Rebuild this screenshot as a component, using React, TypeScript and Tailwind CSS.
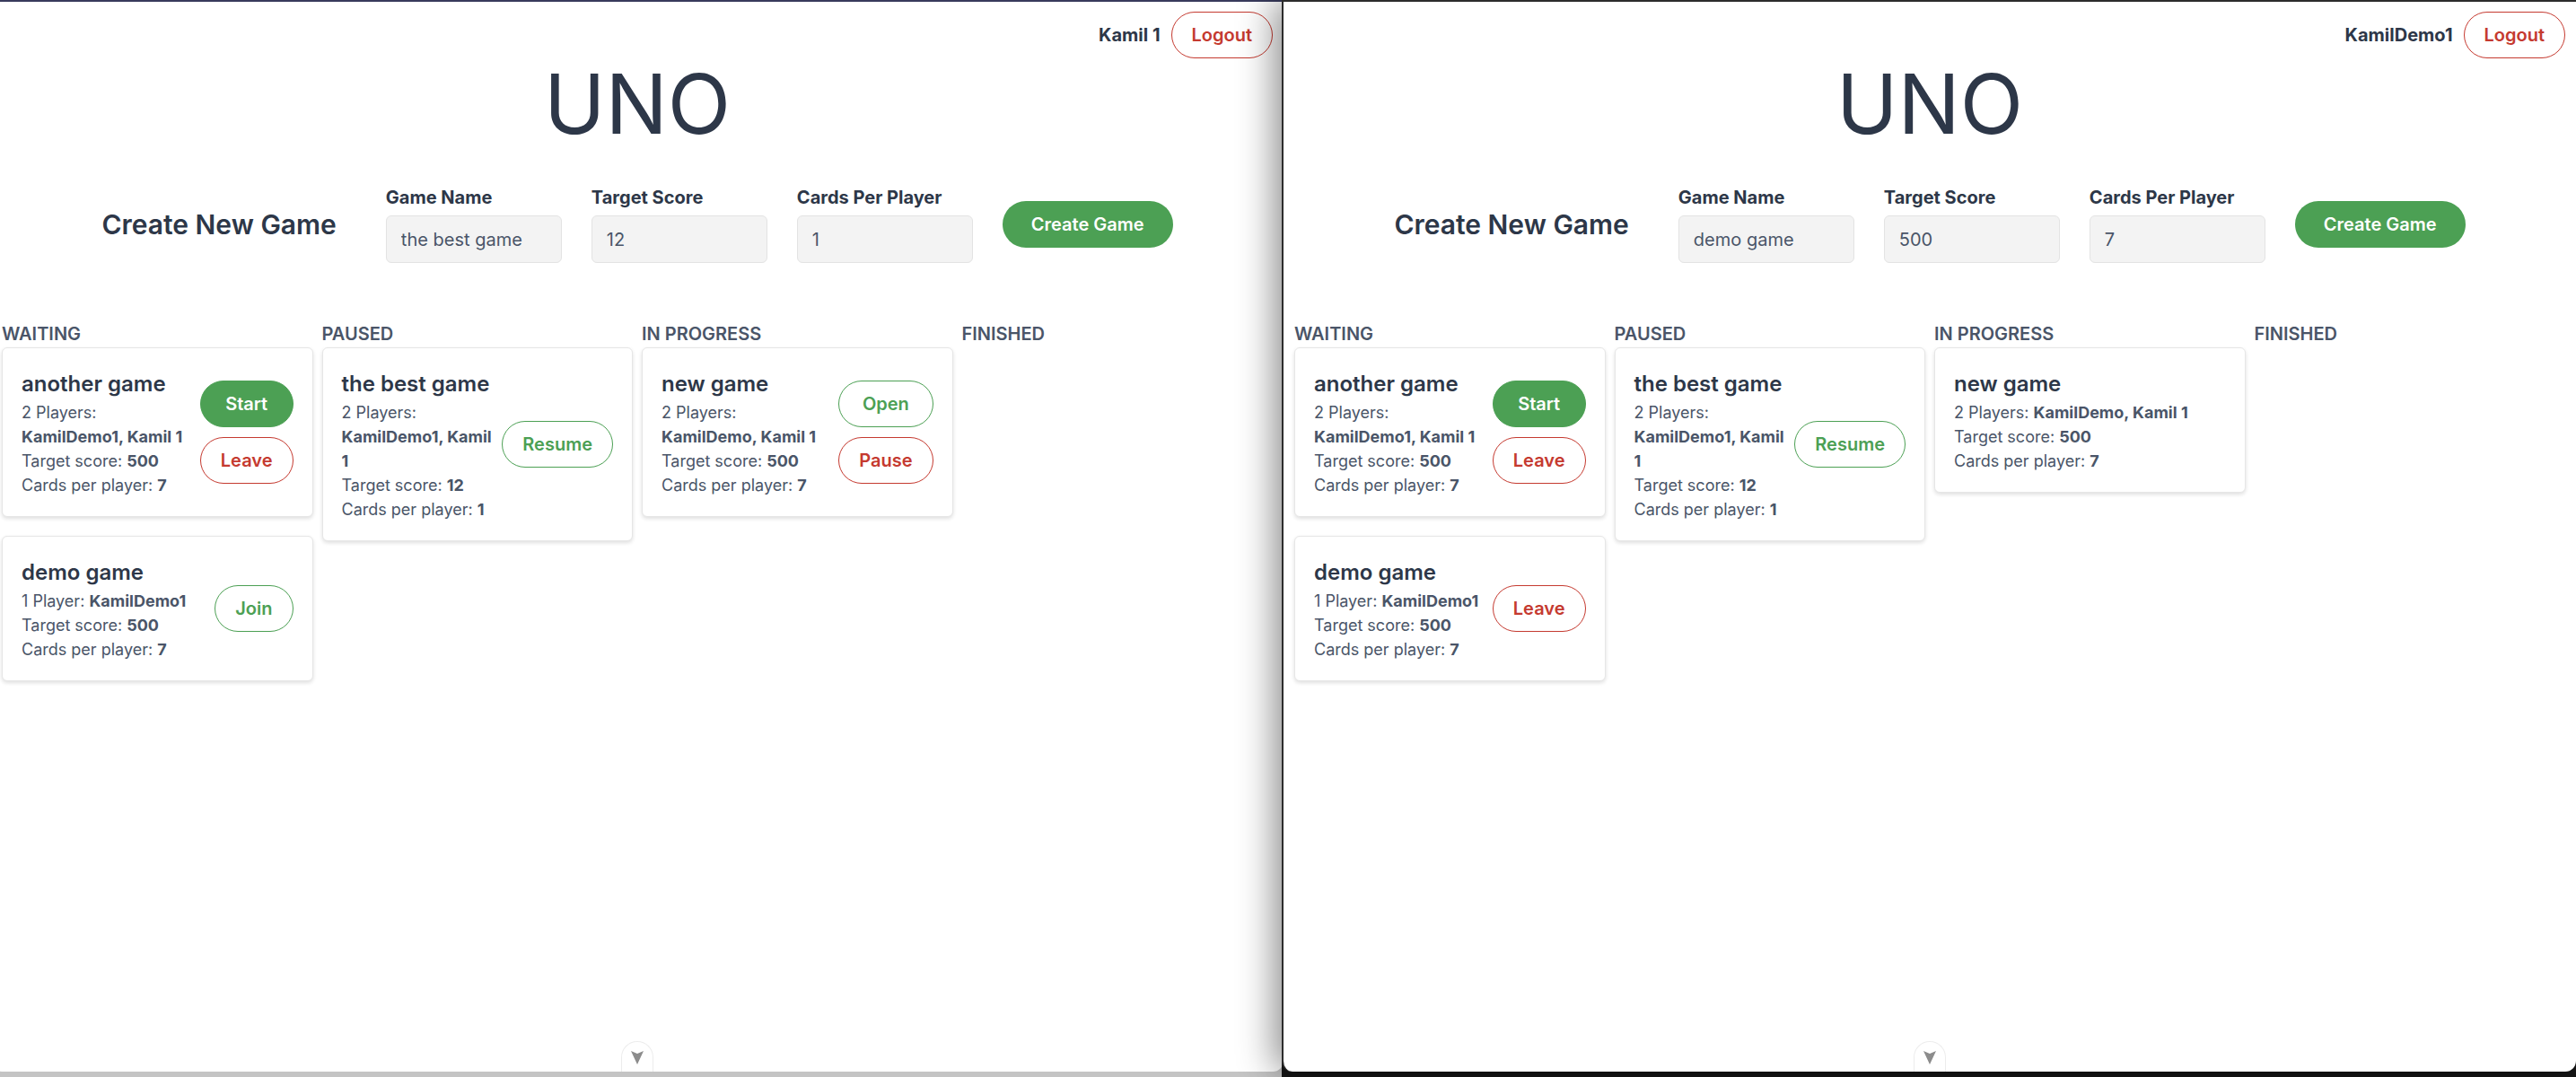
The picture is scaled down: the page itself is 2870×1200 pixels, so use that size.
import React from "react";

type Action = { label: string; kind: "solid" | "green" | "red" };

interface Game {
  name: string;
  count: number;
  players: string;
  target: number;
  cards: number;
  actions: Action[];
  stacked?: boolean;
}

interface PageData {
  user: string;
  form: [string, string, string];
  columns: { title: string; games: Game[] }[];
}

const another = (actions: Action[]): Game => ({
  name: "another game",
  count: 2,
  players: "KamilDemo1, Kamil 1",
  target: 500,
  cards: 7,
  actions,
  stacked: true,
});

const best: Game = {
  name: "the best game",
  count: 2,
  players: "KamilDemo1, Kamil 1",
  target: 12,
  cards: 1,
  actions: [{ label: "Resume", kind: "green" }],
  stacked: true,
};

const pages: PageData[] = [
  {
    user: "Kamil 1",
    form: ["the best game", "12", "1"],
    columns: [
      {
        title: "Waiting",
        games: [
          another([
            { label: "Start", kind: "solid" },
            { label: "Leave", kind: "red" },
          ]),
          {
            name: "demo game",
            count: 1,
            players: "KamilDemo1",
            target: 500,
            cards: 7,
            actions: [{ label: "Join", kind: "green" }],
          },
        ],
      },
      { title: "Paused", games: [best] },
      {
        title: "In Progress",
        games: [
          {
            name: "new game",
            count: 2,
            players: "KamilDemo, Kamil 1",
            target: 500,
            cards: 7,
            actions: [
              { label: "Open", kind: "green" },
              { label: "Pause", kind: "red" },
            ],
            stacked: true,
          },
        ],
      },
      { title: "Finished", games: [] },
    ],
  },
  {
    user: "KamilDemo1",
    form: ["demo game", "500", "7"],
    columns: [
      {
        title: "Waiting",
        games: [
          another([
            { label: "Start", kind: "solid" },
            { label: "Leave", kind: "red" },
          ]),
          {
            name: "demo game",
            count: 1,
            players: "KamilDemo1",
            target: 500,
            cards: 7,
            actions: [{ label: "Leave", kind: "red" }],
          },
        ],
      },
      { title: "Paused", games: [best] },
      {
        title: "In Progress",
        games: [
          {
            name: "new game",
            count: 2,
            players: "KamilDemo, Kamil 1",
            target: 500,
            cards: 7,
            actions: [],
          },
        ],
      },
      { title: "Finished", games: [] },
    ],
  },
];

const btnKinds: Record<Action["kind"], string> = {
  solid: "bg-[#4ca054] border-[#4ca054] text-white",
  green: "bg-white border-[#4ca054] text-[#4ca054]",
  red: "bg-white border-[#c53a30] text-[#c53a30]",
};

const Pill = ({ action }: { action: Action }) => (
  <button
    className={`h-[52px] px-[22px] rounded-full border text-[20px] font-semibold leading-none ${btnKinds[action.kind]}`}
  >
    {action.label}
  </button>
);

const GameCard = ({ game }: { game: Game }) => (
  <div className="flex items-center bg-white border border-[#e6e6e6] rounded-[6px] shadow-[0_2px_4px_rgba(0,0,0,0.13)] p-[21px]">
    <div className="flex-1 min-w-0 text-[18px] leading-[27px] text-[#4a5568]">
      <h3 className="text-[24px] leading-[37px] font-semibold text-[#2d3748]">
        {game.name}
      </h3>
      <p>
        {game.count} {game.count === 1 ? "Player" : "Players"}:{" "}
        <span className={`font-bold ${game.stacked ? "block" : ""}`}>
          {game.players}
        </span>
      </p>
      <p>
        Target score: <span className="font-bold">{game.target}</span>
      </p>
      <p>
        Cards per player: <span className="font-bold">{game.cards}</span>
      </p>
    </div>
    {game.actions.length > 0 && (
      <div className="flex flex-col gap-[11px] ml-[10px] shrink-0">
        {game.actions.map((a) => (
          <Pill key={a.label} action={a} />
        ))}
      </div>
    )}
  </div>
);

const Field = ({ label, value }: { label: string; value: string }) => (
  <div className="flex flex-col">
    <label className="text-[20px] leading-[28px] font-bold text-[#2d3748] mb-[6px]">
      {label}
    </label>
    <input
      readOnly
      value={value}
      className="w-[196px] h-[53px] px-4 text-[20px] text-[#4a5568] bg-[#f3f3f3] border border-[#e3e3e3] rounded-[6px] outline-none"
    />
  </div>
);

const ScrollHint = () => (
  <div className="absolute bottom-0 left-1/2 -translate-x-1/2 w-[36px] h-[34px] rounded-t-full bg-white border border-b-0 border-[#ececec] flex items-center justify-center">
    <svg width="16" height="18" viewBox="0 0 16 18">
      <path d="M1 2 L8 5 L15 2 L8 17 Z" fill="#8c8c8c" />
    </svg>
  </div>
);

const Page = ({ data }: { data: PageData }) => (
  <div className="relative h-full">
    <div className="flex justify-end items-center gap-3 pt-[11px] pr-3">
      <span className="text-[20px] font-bold text-[#2d3748]">{data.user}</span>
      <Pill action={{ label: "Logout", kind: "red" }} />
    </div>

    <h1 className="mt-[5px] text-center text-[92px] leading-[92px] font-normal text-[#2d3748]">
      UNO
    </h1>

    <div className="mt-[44px] flex justify-center items-center gap-[33px]">
      <h2 className="text-[30px] leading-[36px] font-semibold text-[#2d3748] mr-[22px]">
        Create New Game
      </h2>
      <Field label="Game Name" value={data.form[0]} />
      <Field label="Target Score" value={data.form[1]} />
      <Field label="Cards Per Player" value={data.form[2]} />
      <button className="h-[52px] px-8 rounded-full bg-[#4ca054] text-white text-[20px] font-semibold">
        Create Game
      </button>
    </div>

    <div className="mt-[65px] grid grid-cols-4 gap-[10px] px-3">
      {data.columns.map((col) => (
        <div key={col.title}>
          <h4 className="text-[20px] leading-[28px] font-semibold uppercase text-[#4a5568] mb-[1px]">
            {col.title}
          </h4>
          <div className="flex flex-col gap-[21px]">
            {col.games.map((g) => (
              <GameCard key={g.name} game={g} />
            ))}
          </div>
        </div>
      ))}
    </div>

    <ScrollHint />
  </div>
);

export default function App() {
  return (
    <div className="w-[2870px] h-[1200px] overflow-hidden flex bg-[#c4c4c4] font-['Inter',sans-serif]">
      <div className="w-[1440px] -ml-[10px] h-[1194px] shrink-0 bg-white border-t-2 border-[#383a5c] rounded-b-[12px] overflow-hidden">
        <Page data={pages[0]} />
      </div>
      <div className="w-[1442px] -ml-[2px] h-[1200px] shrink-0 relative z-10 bg-[#161616]">
        <div className="h-[1194px] bg-white border-l-2 border-t-2 border-[#2c2c2c] rounded-b-[12px] shadow-[-8px_0_40px_rgba(0,0,0,0.45)] overflow-hidden">
          <Page data={pages[1]} />
        </div>
      </div>
    </div>
  );
}
